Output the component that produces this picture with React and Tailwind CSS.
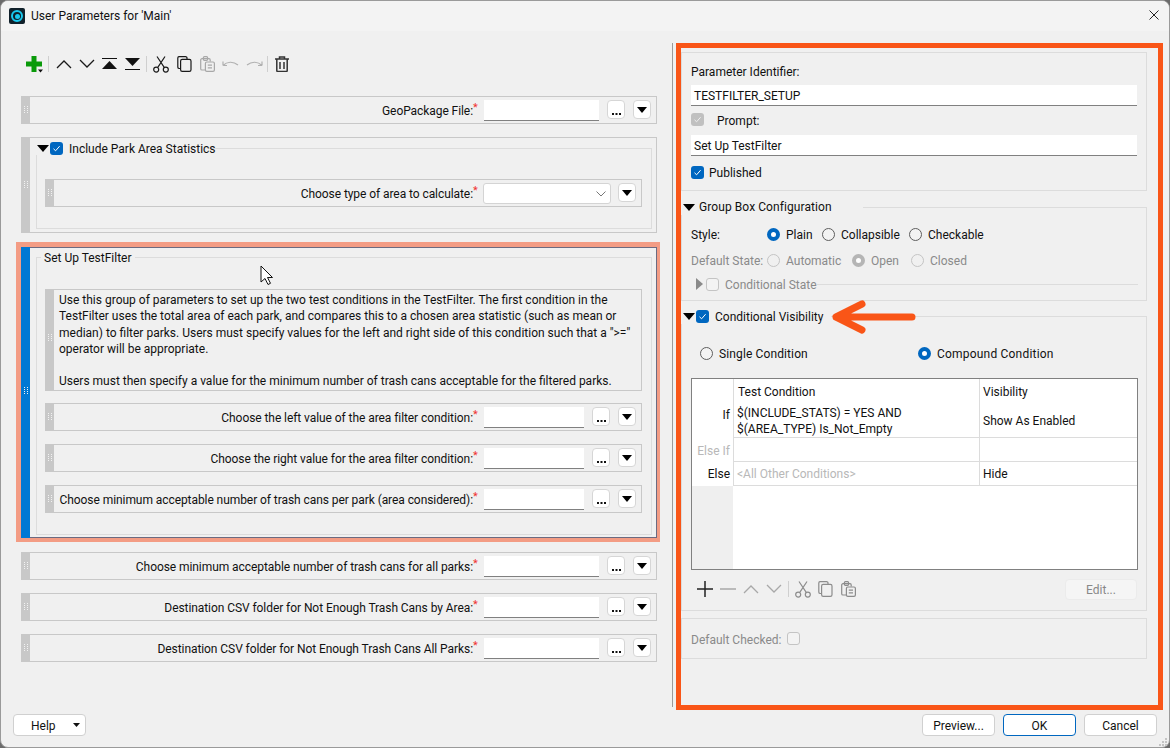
import React from "react";

const Grip = () => (
  <svg width="4" height="8" viewBox="0 0 4 8" className="block">
    {[0, 2, 4, 6].map((y) => (
      <g key={y} fill="#f2f2f2">
        <rect x="0" y={y} width="1" height="1" />
        <rect x="3" y={y} width="1" height="1" />
      </g>
    ))}
  </svg>
);

const Check = ({ className = "" }) => (
  <span className={`absolute w-[13px] h-[13px] rounded-[3px] bg-[#0067c0] flex items-center justify-center ${className}`}>
    <svg width="9" height="9" viewBox="0 0 9 9" fill="none" stroke="#fff" strokeWidth="1">
      <path d="M1.5 4.8 3.6 6.8 7.6 2.2" />
    </svg>
  </span>
);

const Radio = ({ className = "", on, dim }) => (
  <span
    className={`absolute w-[13px] h-[13px] rounded-full ${
      on
        ? dim
          ? "border-[4px] border-[#b5b5b5] bg-white"
          : "border-[4px] border-[#0067c0] bg-white"
        : dim
        ? "border border-[#c4c4c4] bg-[#f0f0f0]"
        : "border border-[#5e5e5e] bg-[#f3f3f3]"
    } ${className}`}
  />
);

const Tri = ({ className = "" }) => (
  <svg width="12" height="7" viewBox="0 0 12 7" className={`absolute ${className}`}>
    <path d="M0 0H12L6 7Z" fill="#000" />
  </svg>
);

const MiniBtn = ({ children }) => (
  <span className="w-[18px] h-[19px] shrink-0 bg-white border border-[#d6d6d6] rounded-[4px] flex items-center justify-center mb-[1px]">
    {children}
  </span>
);

const Dots = () => (
  <svg width="9" height="3" viewBox="0 0 9 3" className="mt-[7px]">
    <path d="M0 1h2v2H0zM3.5 1h2v2h-2zM7 1h2v2H7z" fill="#111" />
  </svg>
);

const DropTri = () => (
  <svg width="10" height="6" viewBox="0 0 10 6">
    <path d="M0 0H10L5 6Z" fill="#000" />
  </svg>
);

const Row = ({ className = "", label, inputW = "w-[115px]" }) => (
  <div className={`absolute h-[28px] flex ${className}`}>
    <div className="w-[9px] bg-[#c8c8c8] flex justify-center pt-[10px]">
      <Grip />
    </div>
    <div className="flex-1 border-y border-r border-[#c8c8c8] flex items-center justify-end pr-[5px]">
      <span className="whitespace-nowrap mt-[2px] tracking-[-0.07px]">{label}:</span>
      <span className="text-[#f03030] text-[11px] leading-none self-start mt-[5px] w-[11px]">*</span>
      <span className={`${inputW} h-[21px] bg-white border-b border-[#808080] mr-[8px] mt-[1px]`} />
      <MiniBtn><Dots /></MiniBtn>
      <span className="w-[8px]" />
      <MiniBtn><DropTri /></MiniBtn>
    </div>
  </div>
);

const Chevron = ({ up, x, y, c = "#1a1a1a" }) => (
  <svg width="16" height="10" viewBox="0 0 16 10" fill="none" stroke={c} strokeWidth="1.3" className="absolute" style={{ left: x, top: y }}>
    <path d={up ? "M1 9 8 2l7 7" : "M1 1l7 7 7-7"} />
  </svg>
);

const Scissors = ({ x, y, c = "#1a1a1a" }) => (
  <svg width="16" height="17" viewBox="0 0 16 17" fill="none" stroke={c} strokeWidth="1.2" className="absolute" style={{ left: x, top: y }}>
    <circle cx="3.2" cy="13.6" r="2.5" />
    <circle cx="12.8" cy="13.6" r="2.5" />
    <path d="M4.6 11.6 12 .5M11.4 11.6 4 .5" />
  </svg>
);

const Copy = ({ x, y, c = "#1a1a1a" }) => (
  <svg width="15" height="16" viewBox="0 0 15 16" fill="none" stroke={c} strokeWidth="1.2" className="absolute" style={{ left: x, top: y }}>
    <path d="M3 12.5H2A1.4 1.4 0 0 1 .8 11V2A1.4 1.4 0 0 1 2 .7h6.5A1.4 1.4 0 0 1 10 2v1" />
    <rect x="3.6" y="3.4" width="10.4" height="12" rx="1.6" />
  </svg>
);

const Paste = ({ x, y, c = "#a8a8a8" }) => (
  <svg width="15" height="16" viewBox="0 0 15 16" fill="none" stroke={c} strokeWidth="1.2" className="absolute" style={{ left: x, top: y }}>
    <path d="M5 14H2A1.3 1.3 0 0 1 .7 12.7V4A1.3 1.3 0 0 1 2 2.7h7A1.3 1.3 0 0 1 10.2 4v1.5" />
    <rect x="3.4" y=".7" width="4.2" height="3.6" rx="1" />
    <rect x="5.4" y="6" width="9" height="9.4" rx="1.4" />
    <path d="M7.8 9.2h4.2M7.8 11.8h4.2" />
  </svg>
);

const Sep = ({ x, y = 56, h = 16 }) => (
  <span className="absolute w-px bg-[#cfcfcf]" style={{ left: x, top: y, height: h }} />
);

export default function App() {
  return (
    <div className="relative w-[1170px] h-[748px] overflow-hidden bg-[#6b6b6b] text-[12px] leading-[16px] text-[#111] font-[Roboto,sans-serif]">
      <div className="absolute inset-0 rounded-[8px] bg-[#f0f0f0] border border-[#9a9a9a] overflow-hidden">
        <div className="absolute left-0 top-0 right-0 h-[30px] bg-[#f3f3f3]" />
      </div>

      {/* Title bar */}
      <span className="absolute left-[9px] top-[8px] w-[16px] h-[16px] rounded-[2px] bg-[#10202a] flex items-center justify-center">
        <span className="w-[12px] h-[12px] rounded-full border-[2px] border-[#19c8ee] flex items-center justify-center">
          <span className="w-[5px] h-[5px] rounded-full bg-[#19c8ee]" />
        </span>
      </span>
      <span className="absolute left-[31px] top-[8px]">User Parameters for 'Main'</span>
      <svg width="10" height="10" viewBox="0 0 10 10" stroke="#222" strokeWidth="1" className="absolute left-[1149px] top-[10px]">
        <path d="M.5.5l9 9M9.5.5l-9 9" />
      </svg>

      {/* Toolbar */}
      <svg width="18" height="18" viewBox="0 0 18 18" className="absolute left-[26px] top-[56px]">
        <path d="M5.500 0h5v5.500H16v5h-5.500V16h-5v-5.500H0v-5h5.500z" fill="#0a9a0a" />
        <path d="M12 13.500h5l-2.500 3z" fill="#111" />
      </svg>
      <Sep x={48} />
      <Chevron up x={56} y={59} />
      <Chevron x={79} y={59} />
      <svg width="16" height="13" viewBox="0 0 16 13" className="absolute left-[102px] top-[58px]">
        <path d="M0 .5h15" stroke="#111" strokeWidth="1" />
        <path d="M7.500 3 15 11H0z" fill="#111" />
      </svg>
      <svg width="16" height="13" viewBox="0 0 16 13" className="absolute left-[125px] top-[58px]">
        <path d="M0 0h15L7.500 8z" fill="#111" />
        <path d="M0 11.500h15" stroke="#111" strokeWidth="1" />
      </svg>
      <Sep x={146} />
      <Scissors x={153} y={56} />
      <Copy x={177} y={56} />
      <Paste x={200} y={56} />
      <svg width="17" height="8" viewBox="0 0 17 8" fill="none" stroke="#b0b0b0" strokeWidth="1.200" className="absolute left-[222px] top-[60px]">
        <path d="M1 5.500C5 1.500 11 1 16 5M1 5.500V1.500M1 5.500h4" />
      </svg>
      <svg width="17" height="8" viewBox="0 0 17 8" fill="none" stroke="#b0b0b0" strokeWidth="1.200" className="absolute left-[246px] top-[60px]">
        <path d="M16 5.500C12 1.500 6 1 1 5M16 5.500V1.500M16 5.500h-4" />
      </svg>
      <Sep x={267} />
      <svg width="14" height="16" viewBox="0 0 14 16" fill="none" stroke="#333" strokeWidth="1.500" className="absolute left-[275px] top-[56px]">
        <path d="M0 3h14M4.500 3V1h5v2M1.800 3v11.500a1 1 0 0 0 1 1h8.400a1 1 0 0 0 1-1V3M5 6v7M9 6v7" />
      </svg>

      {/* Left rows */}
      <Row className="left-[21px] top-[96px] w-[636px]" label="GeoPackage File" />

      {/* Include group */}
      <div className="absolute left-[21px] top-[137px] w-[636px] h-[96px] flex">
        <div className="w-[9px] bg-[#c8c8c8] flex justify-center pt-[44px]"><Grip /></div>
        <div className="flex-1 border-y border-r border-[#c8c8c8]" />
      </div>
      <div className="absolute left-[36px] top-[148px] w-[616px] h-[81px] border border-[#dcdcdc]" />
      <span className="absolute left-[36px] top-[141px] w-[175px] h-[14px] bg-[#f0f0f0]" />
      <Tri className="left-[37px] top-[145px]" />
      <Check className="left-[50px] top-[142px]" />
      <span className="absolute left-[69px] top-[141px]">Include Park Area Statistics</span>
      <div className="absolute left-[45px] top-[179px] w-[597px] h-[28px] flex">
        <div className="w-[9px] bg-[#c8c8c8] flex justify-center pt-[10px]"><Grip /></div>
        <div className="flex-1 border-y border-r border-[#c8c8c8] flex items-center justify-end pr-[5px]">
          <span className="mt-[2px] tracking-[-0.07px]">Choose type of area to calculate:</span>
          <span className="text-[#f03030] text-[11px] leading-none self-start mt-[5px] w-[10px]">*</span>
          <span className="relative w-[128px] h-[21px] bg-white border border-[#d4d4d4] rounded-[3px] mr-[7px] mt-[1px]">
            <svg width="10" height="6" viewBox="0 0 10 6" fill="none" stroke="#777" className="absolute right-[4px] top-[7px]"><path d="M.5.500 5 5 9.500.500" /></svg>
          </span>
          <MiniBtn><DropTri /></MiniBtn>
        </div>
      </div>

      {/* Selected group */}
      <div className="absolute left-[16px] top-[242px] w-[644px] h-[300px] border-t-[5px] border-l-[5px] border-r-[3px] border-b-[4px] border-[#f39c84]">
        <div className="absolute left-0 top-0 right-0 bottom-0 border-t border-r border-b border-[#6c6a80]" />
      </div>
      <div className="absolute left-[21px] top-[247px] w-[9px] h-[291px] bg-[#0078d4] flex justify-center pt-[140px]"><Grip /></div>
      <div className="absolute left-[36px] top-[257px] w-[616px] h-[278px] border border-[#dcdcdc]" />
      <span className="absolute left-[41px] top-[250px] bg-[#f0f0f0] px-[3px]">Set Up TestFilter</span>
      <svg width="15" height="21" viewBox="0 0 15 21" className="absolute left-[260px] top-[265px]">
        <path d="M1 1v16l4-3.500 3 6 2.500-1.200-3-5.800H12.500z" fill="#fff" stroke="#111" strokeWidth="1" />
      </svg>

      <div className="absolute left-[45px] top-[289px] w-[597px] h-[102px] flex">
        <div className="w-[9px] bg-[#c8c8c8] flex justify-center pt-[45px]"><Grip /></div>
        <div className="flex-1 border-y border-r border-[#c8c8c8] pl-[5px] pr-[8px] pt-[2px] leading-[16.33px]">
          <p>Use this group of parameters to set up the two test conditions in the TestFilter. The first condition in the TestFilter uses the total area of each park, and compares this to a chosen area statistic (such as mean or median) to filter parks. Users must specify values for the left and right side of this condition such that a "&gt;=" operator will be appropriate.</p>
          <p className="mt-[16px]">Users must then specify a value for the minimum number of trash cans acceptable for the filtered parks.</p>
        </div>
      </div>
      <Row className="left-[45px] top-[403px] w-[597px]" inputW="w-[100px]" label="Choose the left value of the area filter condition" />
      <Row className="left-[45px] top-[444px] w-[597px]" inputW="w-[100px]" label="Choose the right value for the area filter condition" />
      <Row className="left-[45px] top-[485px] w-[597px]" inputW="w-[100px]" label="Choose minimum acceptable number of trash cans per park (area considered)" />

      <Row className="left-[21px] top-[552px] w-[636px]" label="Choose minimum acceptable number of trash cans for all parks" />
      <Row className="left-[21px] top-[593px] w-[636px]" label="Destination CSV folder for Not Enough Trash Cans by Area" />
      <Row className="left-[21px] top-[634px] w-[636px]" label="Destination CSV folder for Not Enough Trash Cans All Parks" />

      {/* Right panel */}
      <span className="absolute left-[672px] top-[43px] w-px h-[664px] bg-[#9a9a9a]" />
      <div className="absolute left-[681px] top-[52px] w-[466px] h-[139px] border border-[#dcdcdc]" />
      <span className="absolute left-[691px] top-[64px]">Parameter Identifier:</span>
      <div className="absolute left-[691px] top-[85px] w-[446px] h-[21px] bg-white border-b border-[#808080] pl-[3px] pt-[3px]">TESTFILTER_SETUP</div>
      <span className="absolute left-[691px] top-[113px] w-[13px] h-[13px] rounded-[3px] bg-[#c0c0c0] flex items-center justify-center">
        <svg width="9" height="9" viewBox="0 0 9 9" fill="none" stroke="#eee"><path d="M1.500 4.800 3.600 6.800 7.600 2.200" /></svg>
      </span>
      <span className="absolute left-[717px] top-[113px]">Prompt:</span>
      <div className="absolute left-[691px] top-[135px] w-[446px] h-[21px] bg-white border-b border-[#808080] pl-[3px] pt-[3px]">Set Up TestFilter</div>
      <Check className="left-[691px] top-[166px]" />
      <span className="absolute left-[709px] top-[165px]">Published</span>

      {/* Group Box Configuration */}
      <div className="absolute left-[681px] top-[207px] w-[466px] h-[94px] border border-[#dcdcdc]" />
      <span className="absolute left-[681px] top-[199px] w-[182px] h-[16px] bg-[#f0f0f0]" />
      <Tri className="left-[683px] top-[204px]" />
      <span className="absolute left-[699px] top-[199px] tracking-[0.08px]">Group Box Configuration</span>
      <span className="absolute left-[691px] top-[227px]">Style:</span>
      <Radio on className="left-[767px] top-[228px]" />
      <span className="absolute left-[786px] top-[227px]">Plain</span>
      <Radio className="left-[822px] top-[228px]" />
      <span className="absolute left-[841px] top-[227px]">Collapsible</span>
      <Radio className="left-[909px] top-[228px]" />
      <span className="absolute left-[928px] top-[227px]">Checkable</span>
      <span className="absolute left-[691px] top-[253px] text-[#8a8a8a]">Default State:</span>
      <Radio dim className="left-[767px] top-[254px]" />
      <span className="absolute left-[786px] top-[253px] text-[#8a8a8a]">Automatic</span>
      <Radio dim on className="left-[852px] top-[254px]" />
      <span className="absolute left-[871px] top-[253px] text-[#8a8a8a]">Open</span>
      <Radio dim className="left-[911px] top-[254px]" />
      <span className="absolute left-[930px] top-[253px] text-[#8a8a8a]">Closed</span>
      <span className="absolute left-[817px] top-[284px] w-[321px] h-px bg-[#dcdcdc]" />
      <svg width="7" height="12" viewBox="0 0 7 12" className="absolute left-[696px] top-[278px]"><path d="M0 0 7 6 0 12Z" fill="#8a8a8a" /></svg>
      <span className="absolute left-[706px] top-[278px] w-[13px] h-[13px] rounded-[3px] border border-[#c4c4c4] bg-[#f3f3f3]" />
      <span className="absolute left-[725px] top-[277px] text-[#8a8a8a]">Conditional State</span>

      {/* Conditional Visibility */}
      <div className="absolute left-[681px] top-[316px] w-[466px] h-[295px] border border-[#dcdcdc]" />
      <span className="absolute left-[681px] top-[308px] w-[150px] h-[16px] bg-[#f0f0f0]" />
      <Tri className="left-[683px] top-[313px]" />
      <Check className="left-[696px] top-[310px]" />
      <span className="absolute left-[715px] top-[309px]">Conditional Visibility</span>
      <svg width="90" height="36" viewBox="0 0 90 36" fill="none" stroke="#f95517" strokeWidth="7" strokeLinecap="round" strokeLinejoin="round" className="absolute left-[830px] top-[299px]">
        <path d="M6 18H82M32 5 6 18 32 31" />
      </svg>
      <Radio className="left-[700px] top-[347px]" />
      <span className="absolute left-[719px] top-[346px] tracking-[0.12px]">Single Condition</span>
      <Radio on className="left-[918px] top-[347px]" />
      <span className="absolute left-[937px] top-[346px] tracking-[0.2px]">Compound Condition</span>

      {/* Table */}
      <div className="absolute left-[691px] top-[378px] w-[447px] h-[192px] border border-[#808080] bg-white">
        <span className="absolute left-0 top-[107px] w-[41px] h-[83px] bg-[#efefef]" />
        <span className="absolute left-[41px] top-0 w-px h-[107px] bg-[#dcdcdc]" />
        <span className="absolute left-[287px] top-0 w-px h-[107px] bg-[#dcdcdc]" />
        <span className="absolute left-[41px] top-[58px] right-0 h-px bg-[#dcdcdc]" />
        <span className="absolute left-[41px] top-[82px] right-0 h-px bg-[#dcdcdc]" />
        <span className="absolute left-[41px] top-[106px] right-0 h-px bg-[#dcdcdc]" />
        <span className="absolute left-[46px] top-[5px]">Test Condition</span>
        <span className="absolute left-[291px] top-[5px]">Visibility</span>
        <span className="absolute right-[407px] top-[28px]">If</span>
        <div className="absolute left-[45px] top-[26px]">$(INCLUDE_STATS) = YES AND<br />$(AREA_TYPE) Is_Not_Empty</div>
        <span className="absolute left-[291px] top-[34px]">Show As Enabled</span>
        <span className="absolute right-[407px] top-[64px] text-[#b8b8b8]">Else If</span>
        <span className="absolute right-[407px] top-[87px]">Else</span>
        <span className="absolute left-[45px] top-[87px] text-[#b8b8b8]">&lt;All Other Conditions&gt;</span>
        <span className="absolute left-[291px] top-[87px]">Hide</span>
      </div>

      {/* Table toolbar */}
      <svg width="16" height="16" viewBox="0 0 16 16" stroke="#222" strokeWidth="1.500" className="absolute left-[697px] top-[581px]"><path d="M0 8h16M8 0v16" /></svg>
      <svg width="16" height="16" viewBox="0 0 16 16" stroke="#a8a8a8" strokeWidth="1.500" className="absolute left-[720px] top-[581px]"><path d="M0 8h16" /></svg>
      <Chevron up x={743} y={584} c="#a8a8a8" />
      <Chevron x={766} y={584} c="#a8a8a8" />
      <Sep x={788} y={581} />
      <Scissors x={795} y={581} c="#8c8c8c" />
      <Copy x={818} y={581} c="#8c8c8c" />
      <Paste x={841} y={581} c="#8c8c8c" />
      <span className="absolute left-[1065px] top-[579px] w-[72px] h-[21px] bg-[#f5f5f5] border border-[#ebebeb] rounded-[4px] text-[#888] flex items-center justify-center">Edit...</span>

      {/* Default Checked */}
      <div className="absolute left-[681px] top-[618px] w-[466px] h-[41px] border border-[#dcdcdc]" />
      <span className="absolute left-[691px] top-[632px] text-[#8a8a8a]">Default Checked:</span>
      <span className="absolute left-[787px] top-[632px] w-[13px] h-[13px] rounded-[3px] border border-[#c4c4c4] bg-[#f3f3f3]" />

      {/* Orange highlight */}
      <div className="absolute left-[676px] top-[43px] w-[487px] h-[667px] border-[5px] border-[#f95517]" />

      {/* Bottom buttons */}
      <div className="absolute left-[13px] top-[714px] w-[73px] h-[22px] bg-white border border-[#d0d0d0] rounded-[4px] flex items-center pl-[17px] pt-[1px]">Help</div>
      <svg width="7" height="4" viewBox="0 0 7 4" className="absolute left-[73px] top-[723px]"><path d="M0 0h7L3.500 4z" fill="#111" /></svg>
      <div className="absolute left-[922px] top-[714px] w-[73px] h-[22px] bg-white border border-[#d0d0d0] rounded-[4px] flex items-center justify-center pt-[1px]">Preview...</div>
      <div className="absolute left-[1003px] top-[714px] w-[73px] h-[22px] bg-white border border-[#0067c0] rounded-[4px] flex items-center justify-center pt-[1px]">OK</div>
      <div className="absolute left-[1084px] top-[714px] w-[73px] h-[22px] bg-white border border-[#d0d0d0] rounded-[4px] flex items-center justify-center pt-[1px]">Cancel</div>
      <svg width="8" height="8" viewBox="0 0 8 8" fill="#c4c4c4" className="absolute left-[1159px] top-[738px]">
        <path d="M6 0h2v2H6zM3 3h2v2H3zM6 3h2v2H6zM0 6h2v2H0zM3 6h2v2H3zM6 6h2v2H6z" />
      </svg>
    </div>
  );
}
